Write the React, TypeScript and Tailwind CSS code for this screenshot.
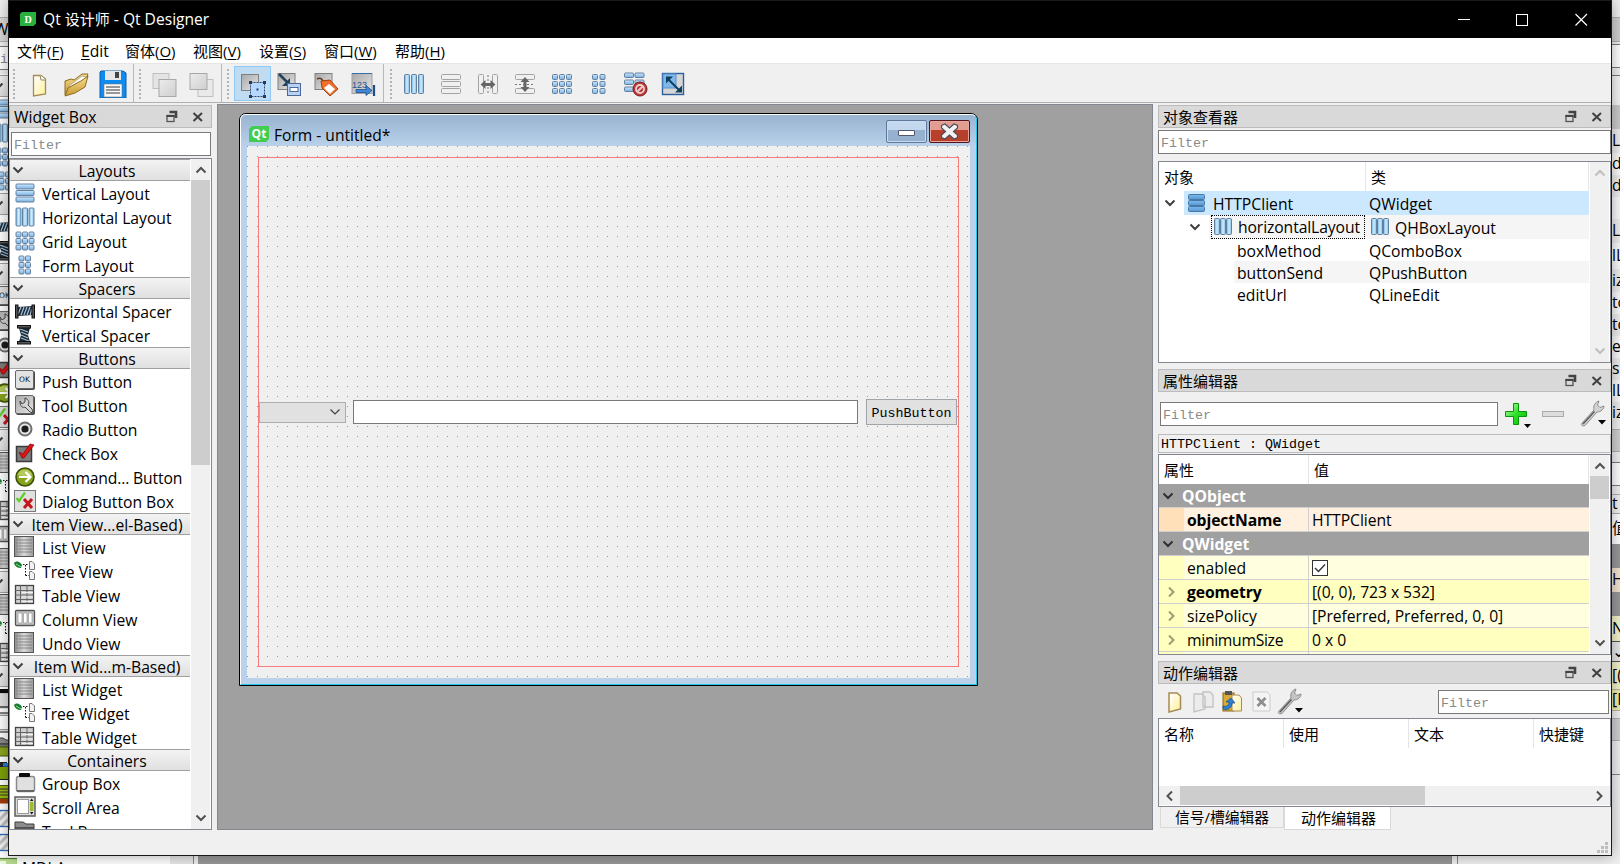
import type { ReactNode } from "react";

/* ---------- shared glyphs ---------- */

type Dir = "down" | "up" | "left" | "right";
const chevronPoints: Record<Dir, string> = {
  down: "1.5,3.5 6,8 10.5,3.5",
  up: "1.5,8.5 6,4 10.5,8.5",
  left: "8,1.5 3.5,6 8,10.5",
  right: "4,1.5 8.5,6 4,10.5",
};

function Chevron({ dir = "down", color = "#404040", size = 12, weight = 2 }: { dir?: Dir; color?: string; size?: number; weight?: number }) {
  return (
    <svg width={size} height={size} viewBox="0 0 12 12" className="shrink-0">
      <polyline points={chevronPoints[dir]} fill="none" stroke={color} strokeWidth={weight} />
    </svg>
  );
}

function Defs() {
  return (
    <svg width="0" height="0" className="absolute">
      <defs>
        <linearGradient id="blueH" x1="0" x2="1" y1="0" y2="0">
          <stop offset="0" stopColor="#6fb2e6" />
          <stop offset=".5" stopColor="#cdeeff" />
          <stop offset="1" stopColor="#86bce6" />
        </linearGradient>
        <linearGradient id="blueV" x1="0" x2="0" y1="0" y2="1">
          <stop offset="0" stopColor="#cfeaff" />
          <stop offset="1" stopColor="#76afe0" />
        </linearGradient>
        <linearGradient id="darkBlue" x1="0" x2="0" y1="0" y2="1">
          <stop offset="0" stopColor="#7cbcf0" />
          <stop offset="1" stopColor="#5896cf" />
        </linearGradient>
        <linearGradient id="greyV" x1="0" x2="1" y1="0" y2="1">
          <stop offset="0" stopColor="#a8a8a8" />
          <stop offset="1" stopColor="#e6e6e6" />
        </linearGradient>
        <linearGradient id="greyL" x1="0" x2="1" y1="0" y2="1">
          <stop offset="0" stopColor="#ececec" />
          <stop offset="1" stopColor="#cfcfcf" />
        </linearGradient>
        <linearGradient id="paper" x1="0" x2="1" y1="0" y2="1">
          <stop offset="0" stopColor="#ffffff" />
          <stop offset="1" stopColor="#fff09a" />
        </linearGradient>
        <linearGradient id="gold" x1="0" x2="0" y1="0" y2="1">
          <stop offset="0" stopColor="#f6dd8c" />
          <stop offset="1" stopColor="#c99a35" />
        </linearGradient>
        <linearGradient id="green" x1="0" x2="1" y1="0" y2="1">
          <stop offset="0" stopColor="#c9ffb9" />
          <stop offset=".5" stopColor="#2ee02a" />
          <stop offset="1" stopColor="#06b806" />
        </linearGradient>
        <linearGradient id="shade" x1="0" x2="1" y1="0" y2="0">
          <stop offset="0" stopColor="#8c8c8c" />
          <stop offset=".5" stopColor="#dadada" />
          <stop offset="1" stopColor="#9a9a9a" />
        </linearGradient>
        <pattern id="hatch" width="6" height="6" patternUnits="userSpaceOnUse" patternTransform="rotate(45)">
          <rect width="6" height="6" fill="#f4f4f4" />
          <rect width="3" height="6" fill="#c4c4c4" />
        </pattern>
      </defs>
    </svg>
  );
}

/* ---------- layout glyphs ---------- */

function Cells({ cols, rows, x, y, w, h, px, py, muted, dark }: { cols: number; rows: number; x: number; y: number; w: number; h: number; px: number; py: number; muted?: boolean; dark?: boolean }) {
  const out: ReactNode[] = [];
  for (let r = 0; r < rows; r++)
    for (let c = 0; c < cols; c++)
      out.push(
        <rect
          key={`${r}-${c}`}
          x={x + c * px}
          y={y + r * py}
          width={w}
          height={h}
          rx="1"
          fill={muted ? "#f0f0f0" : dark ? "url(#darkBlue)" : h > w * 2 ? "url(#blueH)" : "url(#blueV)"}
          stroke={muted ? "#a3a3a3" : dark ? "#4678a8" : "#64809f"}
        />,
      );
  return <>{out}</>;
}

/* ---------- widget box icons, 24 x 24 ---------- */

const widgetIcons: Record<string, ReactNode> = {
  vbox: <Cells cols={1} rows={3} x={3} y={3} w={18} h={5} px={0} py={6.5} />,
  hbox: <Cells cols={3} rows={1} x={3} y={3} w={5} h={18} px={6.5} py={0} />,
  grid: <Cells cols={3} rows={3} x={3} y={3} w={5} h={5} px={6.5} py={6.5} />,
  form: <Cells cols={2} rows={3} x={6} y={3} w={5} h={5} px={6.5} py={6.5} />,
  hspacer: (
    <>
      <path d="M5 8 L19 7 V16 L5 17Z" fill="#1c2833" />
      <path d="M5 15 L8 8 M8 16 L11 8 M11 16 L14 8 M14 16 L17 8 M17 16 L19 10" stroke="#9fc0d8" strokeWidth="1.300" />
      <rect x="2.5" y="6" width="2.500" height="13" fill="#555" stroke="#111" />
      <rect x="19" y="6" width="2.500" height="13" fill="#555" stroke="#111" />
    </>
  ),
  vspacer: (
    <>
      <path d="M6 5 H17 L15 12 L17 19 H6 L8 12Z" fill="#1c2833" />
      <path d="M7 6 L15 9 M8 9 L15 12 M8 12 L15 15 M8 15 L16 18" stroke="#9fc0d8" strokeWidth="1.300" />
      <rect x="4.500" y="2.500" width="13" height="2.500" fill="#555" stroke="#111" />
      <rect x="4.500" y="18.500" width="13" height="2.500" fill="#555" stroke="#111" />
    </>
  ),
  push: (
    <>
      <rect x="3" y="2" width="19" height="19" rx="2" fill="#4a4a4a" />
      <rect x="2.500" y="1.500" width="18" height="18" rx="1.500" fill="#e2e2e2" stroke="#666" />
      <text x="11.500" y="13" fontSize="7.500" textAnchor="middle" fontFamily="DejaVu Sans" fill="#111">OK</text>
    </>
  ),
  tool: (
    <>
      <rect x="3" y="3" width="19" height="19" rx="2" fill="#4a4a4a" />
      <rect x="2.500" y="2.500" width="18" height="18" rx="1.500" fill="url(#greyV)" stroke="#666" />
      <path d="M7 8 C7 14 10 15 12 14 L17 19 L20 20 L19 16 L15 12 C17 9 15 6 12 5 V9 L9 11Z" fill="#d5d5d5" stroke="#444" />
    </>
  ),
  radio: (
    <>
      <circle cx="12" cy="12" r="6.500" fill="#e6e6e6" stroke="#707070" strokeWidth="2" />
      <circle cx="12" cy="12" r="3.600" fill="#1c1c1c" />
    </>
  ),
  check: (
    <>
      <rect x="3.500" y="5.500" width="15" height="15" fill="#7d7d7d" stroke="#3b3b3b" strokeWidth="1.500" />
      <path d="M6 11 L10 13 L17 3 L21 4 L11 17 L9 17Z" fill="#e01414" stroke="#8d0808" strokeWidth=".8" />
    </>
  ),
  command: (
    <>
      <circle cx="12" cy="12" r="9" fill="#86a51d" stroke="#3e5207" strokeWidth="1.600" />
      <path d="M4.500 10 A8 8 0 0 1 19.500 10 Q12 12 4.500 10Z" fill="#b5cc5c" />
      <path d="M6 12 H17 M12.500 7 L17.500 12 L12.500 17" fill="none" stroke="#fff" strokeWidth="2.200" />
    </>
  ),
  dialog: (
    <>
      <rect x="1.500" y="1.500" width="21" height="21" fill="#e0e0e0" stroke="#7a7a7a" />
      <path d="M3.500 9 L6 12 L12 3.500" fill="none" stroke="#5fd02a" strokeWidth="2.300" />
      <path d="M11 10 L19 19 M19 10 L11 19" stroke="#c4161c" strokeWidth="3" />
    </>
  ),
  list: (
    <>
      <rect x="1.500" y="1.500" width="19" height="20" fill="url(#shade)" stroke="#555" />
      <path d="M3 5H19M3 8H19M3 11H19M3 14H19M3 17H19" stroke="#777" strokeWidth=".8" />
      <path d="M5.500 3V21" stroke="#aaa" />
    </>
  ),
  tree: (
    <>
      <path d="M1 4 C4 1 7 3 9 6 L8 9 C5 9 2 8 1 4Z" fill="#1b7c32" />
      <path d="M3 5 L8 8" stroke="#8bdc8f" />
      <path d="M10 5.500H16 M12.500 6V17 M12.500 16.500H16" stroke="#111" strokeDasharray="1.500 1.500" fill="none" />
      <path d="M16.500 2.500H19L21.500 5V10.500H16.500Z M16.500 12.500H19L21.500 15V20.500H16.500Z" fill="#f2f2f2" stroke="#777" />
    </>
  ),
  table: (
    <>
      <rect x="2.500" y="2.500" width="18" height="18" fill="#d0d0d0" stroke="#444" strokeWidth="1.300" />
      <path d="M2.500 7.500H20.500M7.500 2.500V20.500M14 2.500V20.500M2.500 12H20.500M2.500 16.500H20.500" stroke="#666" strokeWidth="1" />
      <path d="M9 9.500H20M9 14H20M9 18.500H20" stroke="#f0f0f0" strokeWidth="1.200" />
    </>
  ),
  column: (
    <>
      <rect x="2.500" y="3.500" width="19" height="15" rx="1" fill="#c8c8c8" stroke="#555" strokeWidth="1.300" />
      <path d="M5 6H9V16H5Z M10.500 6H14V16H10.500Z M15.500 6H19V16H15.500Z" fill="#fff" stroke="#888" strokeWidth=".6" />
    </>
  ),
  group: (
    <>
      <rect x="3.500" y="5.500" width="18" height="15" rx="2" fill="#e0e0e0" stroke="#8a8a8a" strokeWidth="1.500" />
      <path d="M4 20H21" stroke="#666" strokeWidth="2" />
      <rect x="6" y="2" width="11" height="4" rx="1" fill="#0c0c0c" />
    </>
  ),
  scroll: (
    <>
      <rect x="2" y="2" width="20" height="19" fill="#ddd" stroke="#666" strokeWidth="1.600" />
      <rect x="4.500" y="4.500" width="11" height="14" fill="#fff" stroke="#999" />
      <rect x="17" y="7" width="3.500" height="9" fill="#9dbb2f" />
      <path d="M17 6L18.700 3.500L20.400 6ZM17 17L18.700 19.500L20.400 17Z" fill="#111" />
    </>
  ),
  toolbox: (
    <>
      <path d="M2 3 H10 L13 5 H21 V9 H2Z" fill="#8c8c8c" stroke="#3c3c3c" />
      <path d="M2 9 H21 V14 H2Z" fill="#777" stroke="#3c3c3c" />
      <rect x="2.500" y="12" width="18.500" height="9" fill="#8aa51d" stroke="#46570b" />
    </>
  ),
  tab: (
    <>
      <rect x="2.500" y="7.500" width="19" height="13" fill="#7ea008" stroke="#222" />
      <path d="M2 3H14V7H2Z" fill="#222" />
      <rect x="10" y="4" width="8" height="3.500" fill="#2b7be0" />
    </>
  ),
  stacked: (
    <>
      <rect x="2.500" y="2.500" width="18" height="13" fill="#9cb913" stroke="#4c5d04" />
      <path d="M7 6H17M7 9H17M7 12H17" stroke="#333" />
      <rect x="2.500" y="16" width="18" height="4.500" fill="#a63a0c" />
    </>
  ),
  frame: <rect x="2" y="3.500" width="20" height="16" fill="url(#hatch)" stroke="#2d6cc0" strokeWidth="1.300" />,
  mdi: (
    <>
      <rect x="2.500" y="3.500" width="22" height="17" fill="#b6dc8e" stroke="#557f31" strokeWidth="1.200" />
      <rect x="5" y="6" width="8" height="8" fill="#eef8e2" />
    </>
  ),
};

type Group = { title: string; items: [string, string][] };
const groups: Group[] = [
  { title: "Layouts", items: [["vbox", "Vertical Layout"], ["hbox", "Horizontal Layout"], ["grid", "Grid Layout"], ["form", "Form Layout"]] },
  { title: "Spacers", items: [["hspacer", "Horizontal Spacer"], ["vspacer", "Vertical Spacer"]] },
  {
    title: "Buttons",
    items: [["push", "Push Button"], ["tool", "Tool Button"], ["radio", "Radio Button"], ["check", "Check Box"], ["command", "Command... Button"], ["dialog", "Dialog Button Box"]],
  },
  { title: "Item View...el-Based)", items: [["list", "List View"], ["tree", "Tree View"], ["table", "Table View"], ["column", "Column View"], ["list", "Undo View"]] },
  { title: "Item Wid...m-Based)", items: [["list", "List Widget"], ["tree", "Tree Widget"], ["table", "Table Widget"]] },
  { title: "Containers", items: [["group", "Group Box"], ["scroll", "Scroll Area"], ["toolbox", "Tool Box"]] },
];

/* The rear window is covered except for its icons, so only its last entry keeps a label. */
const rearGroups: Group[] = groups.map((g, i) => ({
  title: "",
  items: [
    ...g.items.map(([icon]): [string, string] => [icon, ""]),
    ...(i === 5 ? ([["tab", ""], ["stacked", ""], ["frame", ""], ["frame", ""], ["mdi", "MDI Area"]] as [string, string][]) : []),
  ],
}));

function WidgetTree({ data }: { data: Group[] }) {
  return (
    <div className="flex w-[180px] shrink-0 flex-col">
      {data.map((g, n) => (
        <div key={n} className="flex flex-col">
          <div className="flex h-[22px] items-center border-y border-[#a0a0a0] bg-gradient-to-b from-[#f3f3f3] to-[#e0e0e0] pl-0.5">
            <Chevron />
            <span className="flex-1 whitespace-nowrap pt-[3px] text-center">{g.title}</span>
          </div>
          {g.items.map(([icon, label], i) => (
            <div key={i} className="flex h-6 items-center pl-[3px]">
              <svg width="24" height="24" viewBox="0 0 24 24" className="shrink-0">{widgetIcons[icon]}</svg>
              <span className={`whitespace-nowrap pl-[5px] pt-[3px] ${icon === "command" ? "tracking-[-0.15px]" : ""}`}>{label}</span>
            </div>
          ))}
        </div>
      ))}
    </div>
  );
}

/* ---------- toolbar icons, 28 x 28 ---------- */

const pageIcon = (
  <>
    <path d="M8.500 5.500 H16 L20.500 9 V24 L8.500 26Z" fill="url(#paper)" stroke="#a58b52" strokeWidth="1.300" />
    <path d="M15 5 L16 10 L20.500 10" fill="#fff" stroke="#8d8872" />
  </>
);

const toolbars: { icons: ReactNode[]; className: string; selected?: number }[] = [
  {
    className: "w-[125px]",
    icons: [
      pageIcon,
      <>
        <path d="M3 11 L9 9 L12 10 L20 4 L26 4 L24 10 L8 20 L3 25Z" fill="url(#gold)" stroke="#8c6c22" />
        <path d="M7 16 L20 6 L24 7 L23 10 L8 20Z" fill="#fbfbf5" stroke="#a8a08a" strokeWidth=".8" />
        <path d="M3 26 L6 18 L15 13 L19 11 L26 6 L23 17 L13 23Z" fill="url(#gold)" stroke="#8c6c22" />
      </>,
      <>
        <path d="M2 1 H24 L27 3 V28 H1 V2Z" fill="#0c8cf0" stroke="#0a5fae" />
        <rect x="6" y="1" width="16" height="9" fill="#e6e6e6" />
        <rect x="16" y="2" width="4" height="6" fill="#444" />
        <rect x="5" y="14" width="18" height="13" fill="#fafafa" stroke="#777" strokeWidth=".6" />
        <path d="M7 17H21M7 20H21M7 23H21" stroke="#777" strokeWidth="1.400" />
      </>,
    ],
  },
  {
    className: "w-[88px]",
    icons: [
      <>
        <rect x="2" y="3.500" width="16" height="15" fill="#e4e4e4" stroke="#c0c0c0" />
        <rect x="8" y="9.500" width="17" height="17" fill="url(#greyL)" stroke="#a8a8a8" />
      </>,
      <>
        <rect x="10" y="9.500" width="15" height="17" fill="#eaeaea" stroke="#c0c0c0" />
        <rect x="2" y="3.500" width="17" height="16" fill="url(#greyL)" stroke="#a8a8a8" />
      </>,
    ],
  },
  {
    className: "w-[162px]",
    selected: 0,
    icons: [
      <>
        <rect x="2.500" y="4.500" width="17" height="16" fill="url(#greyV)" stroke="#808080" />
        <rect x="11.500" y="12.500" width="14" height="14" fill="#b4d8ff" stroke="#2d4a75" strokeDasharray="2 1" />
        <path d="M10 11h3v3h-3zM24 11h3v3h-3zM10 25h3v3h-3zM24 25h3v3h-3z" fill="#24395c" />
        <rect x="17.500" y="18.500" width="2" height="2" fill="#24395c" />
      </>,
      <>
        <rect x="2" y="3.500" width="17" height="16" fill="url(#greyV)" stroke="#808080" />
        <path d="M3 4 L12 13" stroke="#24415f" strokeWidth="2.500" />
        <path d="M14 8V16H6Z" fill="#24415f" />
        <rect x="11.500" y="13.500" width="13" height="12" fill="#b9d2f2" stroke="#48699a" />
        <rect x="14" y="17.500" width="8" height="4" fill="#fff" stroke="#48699a" />
      </>,
      <>
        <rect x="2" y="3.500" width="17" height="16" fill="url(#greyV)" stroke="#808080" />
        <path d="M4 9 C8 7 10 10 11 13" fill="none" stroke="#663b22" strokeWidth="1.500" />
        <path d="M8 11 L17 10 L25 19 L17 26 L9 18Z" fill="#f0702a" stroke="#a3410e" />
        <path d="M16 14 L22 19 L17 24 L11 18Z" fill="#fff" />
      </>,
      <>
        <rect x="2" y="3.500" width="20" height="20" fill="url(#greyV)" stroke="#a0a0a0" />
        <path d="M2 3.500H22" stroke="#3a6ea8" />
        <text x="2" y="17.500" fontSize="9" fontFamily="Liberation Sans" fill="#24558f">123</text>
        <path d="M6 19.500H16V15.500L22 20.500L16 25.500V22.500H6Z" fill="#3f87d6" stroke="#1c4d8d" strokeWidth=".8" />
        <path d="M24 15V26" stroke="#1c4d8d" strokeWidth="2.200" />
      </>,
    ],
  },
  {
    className: "flex-1",
    icons: [
      <Cells cols={3} rows={1} x={4.5} y={4.5} w={5} h={19} px={7} py={0} />,
      <Cells cols={1} rows={3} x={4.5} y={4.5} w={19} h={5} px={0} py={7} muted />,
      <>
        <Cells cols={2} rows={1} x={4.500} y={4.500} w={5} h={19} px={14} py={0} muted />
        <path d="M14 5V24" stroke="#777" strokeDasharray="2 2" />
        <path d="M6.500 14.500L11.500 10V13H16.500V10L21.500 14.500L16.500 19V16H11.500V19Z" fill="#666" />
      </>,
      <>
        <Cells cols={1} rows={2} x={4.500} y={4.500} w={19} h={5} px={0} py={14} muted />
        <path d="M4 14.500H24" stroke="#777" strokeDasharray="2 2" />
        <path d="M14 7L18.500 12H15.500V17H18.500L14 22L9.500 17H12.500V12H9.500Z" fill="#666" />
      </>,
      <Cells cols={3} rows={3} x={4.5} y={4.5} w={5} h={5} px={7} py={7} />,
      <Cells cols={2} rows={3} x={7.5} y={4.5} w={5} h={5} px={7.5} py={7} />,
      <>
        <Cells cols={2} rows={3} x={2.500} y={3} w={9} h={4.500} px={10.5} py={7} />
        <circle cx="18" cy="19" r="7" fill="#c13a3a" stroke="#7c1818" />
        <circle cx="18" cy="19" r="4" fill="none" stroke="#eccfcf" strokeWidth="1.800" />
        <path d="M15 22L21 16" stroke="#eccfcf" strokeWidth="1.800" />
      </>,
      <>
        <rect x="3.500" y="3.500" width="21" height="21" fill="#d6d6d6" stroke="#2c5f9e" strokeWidth="1.400" />
        <rect x="4" y="4" width="13" height="14" fill="#7fb7e8" stroke="#5a8fc8" />
        <path d="M9 9L21 21" stroke="#0c4060" strokeWidth="2" />
        <path d="M7 6.500H14L7 13.500ZM23 22.500H16L23 15.500Z" fill="#0c4060" />
      </>,
    ],
  },
];

function Toolbars() {
  return (
    <div className="flex h-[39px] border-b border-[#b0b0b0] bg-[#f0f0f0]">
      {toolbars.map((t, i) => (
        <div key={i} className={`flex ${t.className} ${i < 3 ? "border-r border-[#b8b8b8]" : ""}`}>
          <div className={`flex w-1.5 shrink-0 flex-col gap-0.5 pl-1 pt-[5px] ${i === 0 ? "mr-[5px]" : i === 3 ? "ml-0.5 mr-[3px]" : "ml-px mr-[5px]"}`}>
            {Array.from({ length: 8 }, (_, k) => (
              <span key={k} className="h-0.5 w-0.5 bg-[#b4b4b4]" />
            ))}
          </div>
          {t.icons.map((icon, k) => (
            <div key={k} className={`mt-0.5 flex h-[35px] w-[37px] shrink-0 items-center justify-center ${t.selected === k ? "border border-[#90c8f6] bg-[#c0dcf3]" : ""}`}>
              <svg width="28" height="28" viewBox="0 0 28 28">{icon}</svg>
            </div>
          ))}
        </div>
      ))}
    </div>
  );
}

/* ---------- small parts ---------- */

function DockTitle({ children }: { children: ReactNode }) {
  return (
    <div className="flex h-[23px] shrink-0 items-center border border-[#bcbcbc] bg-[#d9d9d9] pl-1 pr-1.5">
      <span className="flex-1 pt-0.5">{children}</span>
      <svg width="40" height="14" viewBox="0 0 40 14">
        <path d="M4.500 2H11V8" fill="none" stroke="#444" strokeWidth="2.600" />
        <rect x="2" y="5.500" width="7" height="6" fill="#d9d9d9" stroke="#555" strokeWidth="1.300" />
        <path d="M1.500 6H9.500" stroke="#444" strokeWidth="2" />
        <path d="M28.500 3L37 11M37 3L28.500 11" stroke="#404040" strokeWidth="2" />
      </svg>
    </div>
  );
}

function Filter({ className }: { className: string }) {
  return (
    <div className={`flex h-6 shrink-0 items-center border border-[#7a7a7a] bg-white pl-0.5 font-['Liberation_Mono',monospace] text-[13.33px] text-[#8a8a8a] ${className}`}>
      <span className="pt-1">Filter</span>
    </div>
  );
}

function VScroll({ className = "", thumb, muted }: { className?: string; thumb?: string; muted?: boolean }) {
  const color = muted ? "#bfbfbf" : "#505050";
  return (
    <div className={`flex shrink-0 flex-col items-center border-r border-white bg-[#f0f0f0] ${className}`}>
      <div className="flex h-[21px] items-center"><Chevron dir="up" color={color} /></div>
      <div className={`w-full bg-[#cdcdcd] ${thumb ?? "h-0"}`} />
      <div className="flex-1" />
      <div className="flex h-[22px] items-center"><Chevron color={color} /></div>
    </div>
  );
}

function Wrench({ muted }: { muted?: boolean }) {
  return (
    <svg width="30" height="28" viewBox="0 0 30 28">
      <path d="M3 23 L15 10 C14 6 16 2 20 1 L18.500 5 L21 7.500 L25 6 C25 9 22 12 18 12 L6 25.500 C3 26.500 1.500 25 3 23Z" fill={muted ? "#c4c4c4" : "#d2d2d2"} stroke="#8c8c8c" />
      <path d="M4 24 L15.500 11.500" stroke="#555" strokeWidth="1.300" />
      <path d="M19 20H27L23 24.500Z" fill="#000" />
    </svg>
  );
}

/* ---------- menu ---------- */

const menus: [string, string, string][] = [
  ["文件(", "F", "w-[64px]"],
  ["", "Edit", "w-[44px]"],
  ["窗体(", "O", "w-[68px]"],
  ["视图(", "V", "w-[66px]"],
  ["设置(", "S", "w-[65px]"],
  ["窗口(", "W", "w-[71px]"],
  ["帮助(", "H", "w-[60px]"],
];

function MenuBar() {
  return (
    <div className="flex h-[25px] items-center bg-white pl-2 text-[15px]">
      {menus.map(([head, key, w]) => (
        <span key={key} className={`${w} whitespace-nowrap pt-0.5`}>
          {head ? (
            <>{head}<u className="underline-offset-2">{key}</u>)</>
          ) : (
            <span className="text-[15.7px]"><u className="underline-offset-2">E</u>dit</span>
          )}
        </span>
      ))}
    </div>
  );
}

/* ---------- form sub-window ---------- */

function FormWindow() {
  return (
    <div className="absolute left-[21px] top-[8px] flex h-[573px] w-[739px] flex-col rounded-t-[7px] border border-black bg-[#b9d1ea]">
      <div className="flex flex-1 flex-col rounded-t-[6px] border border-b-[#22c8e8] border-l-white border-r-[#22c8e8] border-t-white">
        <div className="flex h-[31px] shrink-0 items-center rounded-t-[5px] bg-gradient-to-b from-[#99b4d1] to-[#b9d1ea] pl-2 pr-1.5">
          <svg width="20" height="16" viewBox="0 0 20 16" className="mt-1.5">
            <path d="M3 0H20V13L17 16H0V3Z" fill="#41cd52" />
            <text x="10" y="12" fontSize="12" fontWeight="bold" textAnchor="middle" fontFamily="Open Sans" fill="#fff">Qt</text>
          </svg>
          <span className="flex-1 pl-[5px] pt-[11px] text-[15.6px]">Form - untitled*</span>
          <div className="mt-px flex h-[23px] w-[41px] items-center justify-center rounded-[2px] border border-[#5f7798] bg-gradient-to-b from-[#c3d8ee] from-45% to-[#96b1d0] to-45% ring-1 ring-inset ring-[#c8dcf0]">
            <div className="mt-1 h-1.5 w-[17px] rounded-[1px] border border-[#505870] bg-white" />
          </div>
          <div className="ml-0.5 mt-px flex h-[23px] w-[41px] items-center justify-center rounded-[2px] border border-[#52151d] bg-gradient-to-b from-[#e29c90] from-45% to-[#b8402a] to-45% ring-1 ring-inset ring-[#e6a79c]">
            <svg width="19" height="17" viewBox="0 0 19 17">
              <path d="M1.500 2.500L5 1L9.500 5L14 1L17.500 2.500V5L13.500 8.500L17.500 12V14.500L14 16L9.500 12L5 16L1.500 14.500V12L5.500 8.500L1.500 5Z" fill="#f2f2f2" stroke="#4d4d60" strokeWidth="1.200" />
            </svg>
          </div>
        </div>
        <div className="flex flex-1 pb-1.5 pl-1.5 pr-1.5">
          <div className="flex flex-1 bg-[linear-gradient(90deg,transparent_1px,#f0f0f0_1px),linear-gradient(#969696_1px,#f0f0f0_1px)] bg-[size:10px_10px] p-[11px]">
            <div className="flex flex-1 items-center border border-[#f87c7c]">
              <div className="flex h-[21px] w-[87px] items-center justify-end border border-[#adadad] bg-[#e1e1e1] pr-1">
                <Chevron weight={1.2} />
              </div>
              <div className="ml-[7px] h-6 w-[505px] border border-[#7a7a7a] bg-white" />
              <div className="ml-2 flex h-[26px] w-[91px] items-center justify-center border border-[#a0a5aa] bg-[#e1e1e1] pt-1 font-['Liberation_Mono',monospace] text-[13.33px]">PushButton</div>
            </div>
          </div>
        </div>
      </div>
    </div>
  );
}

/* ---------- right docks ---------- */

function TreeIcon({ kind }: { kind: "v" | "h" }) {
  return (
    <svg width="20" height="20" viewBox="0 0 20 20" className="shrink-0">
      {kind === "v" ? <Cells cols={1} rows={3} x={1.5} y={1.5} w={16} h={5} px={0} py={6} dark /> : <Cells cols={3} rows={1} x={1.5} y={1.5} w={5} h={16} px={6} py={0} />}
    </svg>
  );
}

function ObjectInspector() {
  return (
    <div className="mt-[7px] flex h-[202px] border border-[#828790] bg-white">
      <div className="flex w-[430px] flex-col">
        <div className="flex h-[29px] shrink-0 items-center text-[15px]">
          <span className="w-[206px] pl-[5px] pt-0.5">对象</span>
          <span className="flex h-full flex-1 items-center border-x border-[#e5e5e5] pl-[5px] pt-0.5">类</span>
        </div>
        <div className="flex h-6 shrink-0 items-center">
          <span className="flex w-[25px] pl-[5px]"><Chevron /></span>
          <div className="flex h-full flex-1 items-center bg-[#cce8ff] pl-[3px]">
            <TreeIcon kind="v" />
            <span className="w-[162px] pl-1.5 pt-[3px]">HTTPClient</span>
            <span className="pt-[3px]">QWidget</span>
          </div>
        </div>
        <div className="flex h-6 shrink-0 items-center">
          <span className="flex w-[50px] justify-end pr-2"><Chevron /></span>
          <div className="flex h-full flex-1 items-center bg-[#f5f5f5] pl-0.5">
            <div className="flex h-6 w-[154px] items-center border border-dotted border-black pl-px">
              <TreeIcon kind="h" />
              <span className="pl-[5px] pt-0.5 tracking-[-0.1px]">horizontalLayout</span>
            </div>
            <span className="flex pl-[5px]"><TreeIcon kind="h" /></span>
            <span className="pl-[5px] pt-[3px]">QHBoxLayout</span>
          </div>
        </div>
        {[["boxMethod", "QComboBox"], ["buttonSend", "QPushButton"], ["editUrl", "QLineEdit"]].map(([a, b], i) => (
          <div key={a} className="flex h-[22px] shrink-0 items-center pl-[75px]">
            <div className={`flex h-full flex-1 items-center pl-[3px] pt-[3px] ${i === 1 ? "bg-[#f5f5f5]" : ""}`}>
              <span className="w-[132px]">{a}</span>
              <span>{b}</span>
            </div>
          </div>
        ))}
      </div>
      <VScroll className="ml-px w-5" muted />
    </div>
  );
}

const properties: { name: string; value: ReactNode; bold?: boolean; arrow?: boolean; base: string; tint: string }[] = [
  {
    name: "enabled",
    value: (
      <svg width="16" height="16" viewBox="0 0 16 16">
        <rect x=".5" y=".5" width="15" height="15" fill="#fff" stroke="#333" />
        <path d="M3 8L6.500 11.500L13 4.500" fill="none" stroke="#333" strokeWidth="1.400" />
      </svg>
    ),
    base: "bg-[#ffffbf]",
    tint: "bg-[#ffffdf]",
  },
  { name: "geometry", value: "[(0, 0), 723 x 532]", bold: true, arrow: true, base: "bg-[#ffffbf]", tint: "bg-[#ffffbf]" },
  { name: "sizePolicy", value: "[Preferred, Preferred, 0, 0]", arrow: true, base: "bg-[#ffffbf]", tint: "bg-[#ffffdf]" },
  { name: "minimumSize", value: "0 x 0", arrow: true, base: "bg-[#ffffbf]", tint: "bg-[#ffffbf]" },
];

function PropertyRow({ name, value, bold, arrow, base, tint }: (typeof properties)[number]) {
  return (
    <div className="flex h-6 shrink-0 border-b border-[#d0d0d0]">
      <span className={`flex w-[25px] items-center justify-end pr-[7px] ${base}`}>{arrow && <Chevron dir="right" color="#9c9c74" />}</span>
      <span className={`flex w-[124px] items-center pl-[3px] pt-[3px] ${tint} ${bold ? "font-bold tracking-[-0.1px]" : name === "minimumSize" ? "tracking-[-0.3px]" : ""}`}>{name}</span>
      <span className={`flex flex-1 items-center border-l border-[#d0d0d0] pl-[3px] tracking-[-0.05px] ${typeof value === "string" ? "pt-[3px]" : "pt-px"} ${tint}`}>{value}</span>
    </div>
  );
}

function GroupRow({ children }: { children: ReactNode }) {
  return (
    <div className="flex h-6 shrink-0 items-center border-b border-[#d0d0d0] bg-[#a0a0a0] pl-[3px]">
      <Chevron color="#303030" />
      <span className="pl-2 pt-[3px] font-bold text-white">{children}</span>
    </div>
  );
}

function PropertyEditor() {
  return (
    <div className="mt-px flex h-[201px] overflow-hidden border border-[#828790] bg-white">
      <div className="flex w-[430px] flex-col overflow-hidden">
        <div className="flex h-[29px] shrink-0 items-center text-[15px]">
          <span className="w-[149px] pl-[5px] pt-0.5">属性</span>
          <span className="flex h-full flex-1 items-center border-x border-[#e5e5e5] pl-[5px] pt-0.5">值</span>
        </div>
        <GroupRow>QObject</GroupRow>
        <PropertyRow name="objectName" value="HTTPClient" bold base="bg-[#ffe0b9]" tint="bg-[#fff0df]" />
        <GroupRow>QWidget</GroupRow>
        {properties.map((p) => <PropertyRow key={p.name} {...p} />)}
        <PropertyRow name="" value="" base="bg-[#ffffbf]" tint="bg-[#ffffdf]" />
      </div>
      <VScroll className="ml-px w-5" thumb="h-[23px]" />
    </div>
  );
}

const actionIcons: ReactNode[] = [
  <path d="M11 4H19L22.500 7V20L11 23Z" fill="url(#paper)" stroke="#a58b52" strokeWidth="1.500" />,
  <path d="M16 3H23L26 6V18H16ZM7 5H15L18 8V20L7 23Z" fill="#ececec" stroke="#c2c2c2" strokeWidth="1.300" />,
  <>
    <rect x="7" y="4" width="11" height="18" fill="#d9ab35" stroke="#87671a" />
    <rect x="9" y="2" width="7" height="4" fill="#555" />
    <path d="M16 6H23L25.500 9V22H16Z" fill="url(#paper)" stroke="#a58b52" />
    <path d="M7 17C11 18 13 16 13 13H10L15 9L19 14H16C16 19 11 22 7 20Z" fill="#2f7fd0" stroke="#174f8e" strokeWidth=".7" />
  </>,
  <>
    <path d="M8 3H22L25 6V22H8Z" fill="#f4f4f4" stroke="#cccccc" />
    <path d="M12.500 9L20.500 17M20.500 9L12.500 17" stroke="#8d8d8d" strokeWidth="2.600" />
  </>,
];

function ActionEditor() {
  return (
    <>
      <div className="flex h-[34px] items-center pr-0.5 pt-px">
        {actionIcons.map((icon, i) => (
          <svg key={i} width="29" height="26" viewBox="0 0 29 26">{icon}</svg>
        ))}
        <span className="ml-0.5"><Wrench muted /></span>
        <div className="flex-1" />
        <Filter className="mt-px w-[171px]" />
      </div>
      <div className="flex h-[89px] flex-col border border-[#828790] bg-white">
        <div className="flex h-[29px] text-[15px]">
          {["名称", "使用", "文本", "快捷键"].map((h, i) => (
            <span key={h} className={`flex items-center pl-[5px] pt-0.5 ${i < 3 ? "w-[125px] border-r border-[#e5e5e5]" : "flex-1"}`}>{h}</span>
          ))}
        </div>
        <div className="flex-1" />
        <div className="mb-px flex h-[19px] items-center bg-[#f0f0f0]">
          <span className="flex w-[21px] justify-center"><Chevron dir="left" color="#505050" /></span>
          <div className="h-full w-[245px] bg-[#cdcdcd]" />
          <div className="flex-1" />
          <span className="flex w-[23px] justify-center"><Chevron dir="right" color="#505050" /></span>
        </div>
      </div>
      <div className="flex items-start pl-0.5 text-[15px]">
        <div className="flex h-[21px] w-[124px] items-center justify-center border border-t-0 border-[#d9d9d9] text-[14.8px]">信号/槽编辑器</div>
        <div className="flex h-[23px] w-[107px] items-center justify-center border border-t-0 border-[#d9d9d9] bg-white pl-0.5">动作编辑器</div>
      </div>
    </>
  );
}

/* ---------- window behind, visible round the edges ---------- */

const rightEdge: [string, string][] = [
  ["h-[17px] bg-[#f0f0f0]", ""],
  ["h-[25px] border-y border-[#b0b0b0] bg-[#d0d0d0]", ""],
  ["h-[2px]", ""],
  ["h-[24px] border-y border-[#7a7a7a] bg-white", ""],
  ["h-[7px]", ""],
  ["h-[30px] border-t border-[#7a7a7a] bg-[#f5f5f5]", ""],
  ["h-[24px] bg-[#cbcbcb]", ""],
  ["h-[24px] bg-[#eee]", "La"],
  ["h-[22px] bg-[#fafafa]", "d"],
  ["h-[22px] bg-[#eee]", "d"],
  ["h-[22px] bg-[#fafafa]", ""],
  ["h-[24px] bg-[#eee]", "La"],
  ["h-[26px] bg-[#fafafa]", "lL"],
  ["h-[23px] bg-[#eee]", "iz"],
  ["h-[22px] bg-[#fafafa]", "to"],
  ["h-[22px] bg-[#eee]", "to"],
  ["h-[22px] bg-[#fafafa]", "el"],
  ["h-[22px] bg-[#eee]", "si"],
  ["h-[22px] bg-[#fafafa]", "lL"],
  ["h-[22px] bg-[#eee]", "iz"],
  ["h-[5px]", ""],
  ["h-[23px] border-y border-[#b0b0b0] bg-[#d0d0d0]", ""],
  ["h-[10px]", ""],
  ["h-[24px] border-y border-[#7a7a7a] bg-white", ""],
  ["h-[8px]", ""],
  ["h-[20px] border-y border-[#b0b0b0]", "t"],
  ["h-[30px] bg-white", "值"],
  ["h-[24px] bg-[#989898]", ""],
  ["h-[24px] bg-[#f3e2cf]", "H"],
  ["h-[24px] bg-[#989898]", ""],
  ["h-[25px] bg-[#f3f3c9]", "N"],
  ["h-[21px] border-y border-[#555] bg-[#e8e8e8]", "⌄"],
  ["h-[27px] bg-[#f3f3c9]", "[("],
  ["h-[22px] border-y border-[#b8b8a0] bg-[#ededab]", "[P"],
  ["h-[7px]", ""],
  ["h-[23px] border-y border-[#b0b0b0] bg-[#d0d0d0]", ""],
  ["h-[34px] border-b border-[#828790]", ""],
];

function BackdropWindow() {
  return (
    <div className="absolute inset-0 flex bg-[#f0f0f0]">
      <div className="flex w-[193px] flex-col overflow-hidden">
        <div className="h-[18px] shrink-0 border-b border-[#b0b0b0]" />
        <div className="flex h-[24px] shrink-0 items-center border-b border-[#b0b0b0] bg-[#d9d9d9]"><span className="-ml-1.5">W</span></div>
        <div className="mt-1 flex h-6 shrink-0 items-center border-y border-[#7a7a7a] bg-white pt-1 font-['Liberation_Mono',monospace] text-[13.33px] text-[#8a8a8a]">i</div>
        <div className="mt-[4px] flex flex-1 overflow-hidden bg-white">
          <div className="-ml-2.5 mt-px"><WidgetTree data={rearGroups} /></div>
          <div className="flex-1 bg-[#e8e8e8]" />
        </div>
      </div>
      <div className="w-[5px] border-l border-[#828790]" />
      <div className="w-[1254px] border-r border-[#828790] bg-[#989898]" />
      <div className="ml-[5px] w-px bg-[#828790]" />
      <div className="flex-1" />
      <div className="flex w-[8px] flex-col overflow-hidden whitespace-nowrap">
        {rightEdge.map(([c, t], i) => (
          <div key={i} className={`flex shrink-0 items-center overflow-hidden ${c}`}>{t}</div>
        ))}
      </div>
    </div>
  );
}

/* ---------- page ---------- */

export default function App() {
  return (
    <div className="relative h-[864px] w-[1620px] overflow-hidden font-['Open_Sans','Noto_Sans_CJK_SC',sans-serif] text-[15.7px] leading-none text-black">
      <Defs />
      <BackdropWindow />
      <div className="absolute left-2 top-0 flex h-[856px] w-[1604px] flex-col border border-[#1a1a1a] bg-[#f0f0f0] shadow-[0_0_14px_rgba(0,0,0,0.35)]">
        <div className="flex h-[37px] shrink-0 items-center bg-black pl-[11px] text-white">
          <svg width="16" height="14" viewBox="0 0 16 14" className="-mt-0.5">
            <path d="M2 0H16V11.500L13.500 14H0V2Z" fill="#28b13c" />
            <text x="8" y="10.800" fontSize="10" fontWeight="bold" textAnchor="middle" fontFamily="Liberation Serif" fill="#fff">D</text>
          </svg>
          <span className="flex-1 pl-[7px] text-[15.6px]">Qt <span className="text-[15px]">设计师</span> - Qt Designer</span>
          <svg width="130" height="14" viewBox="0 0 130 14" className="-mt-0.5 mr-[23px]">
            <path d="M0 7.500H12" stroke="#fff" />
            <rect x="58.500" y="2.500" width="11" height="11" fill="none" stroke="#fff" />
            <path d="M117.500 2L129 13.500M129 2L117.500 13.500" stroke="#fff" strokeWidth="1.200" />
          </svg>
        </div>
        <MenuBar />
        <div className="h-px shrink-0 bg-[#e6e6e6]" />
        <Toolbars />
        <div className="flex flex-1">
          <div className="flex w-[203px] flex-col pt-[2px]">
            <DockTitle><span className="tracking-[-0.03px]">Widget Box</span></DockTitle>
            <Filter className="ml-0.5 mr-px mt-1" />
            <div className="mt-0.5 flex h-[672px] overflow-hidden border border-[#828790] bg-white">
              <WidgetTree data={groups} />
              <VScroll className="ml-px w-5" thumb="h-[285px]" />
            </div>
          </div>
          <div className="relative ml-[5px] mt-px h-[726px] w-[936px] border border-[#828790] bg-[#a0a0a0]">
            <FormWindow />
          </div>
          <div className="ml-[5px] flex w-[453px] flex-col pt-[2px]">
            <DockTitle><span className="text-[15px]">对象查看器</span></DockTitle>
            <Filter className="mt-0.5" />
            <ObjectInspector />
            <div className="mt-1.5 flex flex-col">
              <DockTitle><span className="text-[15px]">属性编辑器</span></DockTitle>
              <div className="flex h-[42px] items-center pl-0.5">
                <Filter className="mt-0.5 w-[338px]" />
                <svg width="74" height="30" viewBox="0 0 74 30" className="ml-[3px] mt-px">
                  <path d="M12.500 4.500H17.500V12.500H25.500V17.500H17.500V25.500H12.500V17.500H4.500V12.500H12.500Z" fill="url(#green)" stroke="#079407" />
                  <path d="M23 25H30L26.500 29Z" fill="#000" />
                  <rect x="41.500" y="12.500" width="21" height="5" fill="#ddd" stroke="#aaa" />
                </svg>
                <span className="ml-1 mt-0.5"><Wrench /></span>
              </div>
              <div className="flex h-[19px] items-center whitespace-pre border border-[#bcbcbc] pl-0.5 pt-[3px] font-['Liberation_Mono',monospace] text-[13.33px]">HTTPClient : QWidget</div>
              <PropertyEditor />
            </div>
            <div className="mt-1.5 flex flex-col">
              <DockTitle><span className="text-[15px]">动作编辑器</span></DockTitle>
              <ActionEditor />
            </div>
          </div>
        </div>
        <div className="flex h-6 shrink-0 items-end justify-end pb-0.5 pr-[3px]">
          <svg width="11" height="11" viewBox="0 0 11 11">
            <path d="M8 0h3v3h-3zM4 4h3v3h-3zM8 4h3v3h-3zM0 8h3v3h-3zM4 8h3v3h-3zM8 8h3v3h-3z" fill="#bdbdbd" />
          </svg>
        </div>
      </div>
    </div>
  );
}
